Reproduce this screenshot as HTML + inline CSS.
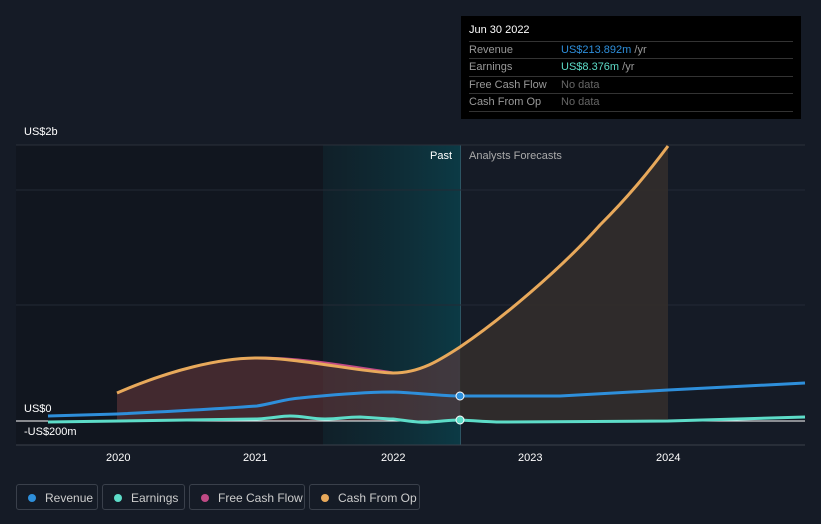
<!DOCTYPE html>
<html><head><style>
body{margin:0;width:821px;height:524px;background:#151b26;font-family:"Liberation Sans",sans-serif;overflow:hidden;position:relative}
.t{position:absolute;font-size:11px;color:#fff}
.tip{position:absolute;left:461px;top:16px;width:340px;height:103px;background:#000;}
.tip .r{position:absolute;left:8px;width:324px;border-top:1px solid #333;height:17px;font-size:11px;color:#999;line-height:17px}
.leg{position:absolute;top:484px;height:26px;border:1px solid #3a404b;border-radius:3px;font-size:12px;color:#ccc;line-height:26px;box-sizing:border-box}
.leg i{display:inline-block;width:8px;height:8px;border-radius:50%;margin:0 9px 0 11px;vertical-align:-0px}
</style></head><body>
<svg width="821" height="524" style="position:absolute;left:0;top:0">
<defs><linearGradient id="g" x1="0" x2="1"><stop offset="0" stop-color="#0f2a33" stop-opacity=".5"/><stop offset="1" stop-color="#0c3a45"/></linearGradient></defs>
<rect x="16" y="145" width="444" height="300" fill="#11161f"/>
<rect x="323" y="145" width="137" height="300" fill="url(#g)"/>
<rect x="460" y="145" width="1" height="300" fill="#2c5563"/>
<line x1="16" y1="145" x2="805" y2="145" stroke="#2a303b"/>
<line x1="16" y1="190" x2="805" y2="190" stroke="#232a35"/>
<line x1="16" y1="305" x2="805" y2="305" stroke="#232a35"/>
<line x1="16" y1="445" x2="805" y2="445" stroke="#3a404b"/>
<path d="M117 393 C170 370 220 358 257 358 C300 358 360 372 393 373 C420 373 440 360 460 347 C500 320 560 270 600 225 C630 195 650 170 668 146 L668 421 L117 421Z" fill="#6b3a3d" opacity=".55"/>
<path d="M460 347 C500 320 560 270 600 225 C630 195 650 170 668 146 L668 421 L460 421Z" fill="#2e2b2a" opacity=".9"/>
<path d="M257 358 C300 358 340 365 393 373" fill="none" stroke="#c04a85" stroke-width="3"/>
<path d="M117 393 C170 370 220 358 257 358 C300 358 360 372 393 373 C420 373 440 360 460 347 C500 320 560 270 600 225 C630 195 650 170 668 146" fill="none" stroke="#e8a95b" stroke-width="3"/>
<line x1="16" y1="421" x2="805" y2="421" stroke="#fff" stroke-width="1"/>
<path d="M48 416 L117 414 C180 411 230 408 257 406 C275 403 285 399 300 398 C340 394 370 392 393 392 C420 393 440 396 460 396 L560 396 C620 393 668 390 668 390 L805 383" fill="none" stroke="#2e8fdb" stroke-width="3"/>
<path d="M48 422 L257 419 C275 418 280 416 290 416 C305 416 310 419 325 419 C340 419 345 417 360 417 C380 418 385 419 393 419 C410 421 420 423 430 422 C445 421 450 420 460 420 C480 421 490 422 500 422 L668 421 L805 417" fill="none" stroke="#5ddcc8" stroke-width="3"/>
<circle cx="460" cy="396" r="4" fill="#2e8fdb" stroke="#fff" stroke-width="1"/>
<circle cx="460" cy="420" r="4" fill="#5ddcc8" stroke="#fff" stroke-width="1"/>
</svg>
<div class="t" style="left:24px;top:126px">US$2b</div>
<div class="t" style="left:24px;top:403px">US$0</div>
<div class="t" style="left:24px;top:426px">-US$200m</div>
<div class="t" style="left:430px;top:150px">Past</div>
<div class="t" style="left:469px;top:150px;color:#aaa">Analysts Forecasts</div>
<div class="t" style="left:106px;top:452px">2020</div>
<div class="t" style="left:243px;top:452px">2021</div>
<div class="t" style="left:381px;top:452px">2022</div>
<div class="t" style="left:518px;top:452px">2023</div>
<div class="t" style="left:656px;top:452px">2024</div>
<div class="tip">
<div style="position:absolute;left:8px;top:8px;color:#fff;font-size:11px">Jun 30 2022</div>
<div class="r" style="top:25px">Revenue<span style="position:absolute;left:92px;color:#2e8fdb">US$213.892m <span style="color:#999">/yr</span></span></div>
<div class="r" style="top:42px">Earnings<span style="position:absolute;left:92px;color:#5ddcc8">US$8.376m <span style="color:#999">/yr</span></span></div>
<div class="r" style="top:60px">Free Cash Flow<span style="position:absolute;left:92px;color:#666">No data</span></div>
<div class="r" style="top:77px;border-bottom:1px solid #333">Cash From Op<span style="position:absolute;left:92px;color:#666">No data</span></div>
</div>
<div class="leg" style="left:16px;width:82px"><i style="background:#2e8fdb"></i>Revenue</div>
<div class="leg" style="left:102px;width:83px"><i style="background:#5ddcc8"></i>Earnings</div>
<div class="leg" style="left:189px;width:116px"><i style="background:#c04a85"></i>Free Cash Flow</div>
<div class="leg" style="left:309px;width:111px"><i style="background:#e8a95b"></i>Cash From Op</div>
</body></html>
